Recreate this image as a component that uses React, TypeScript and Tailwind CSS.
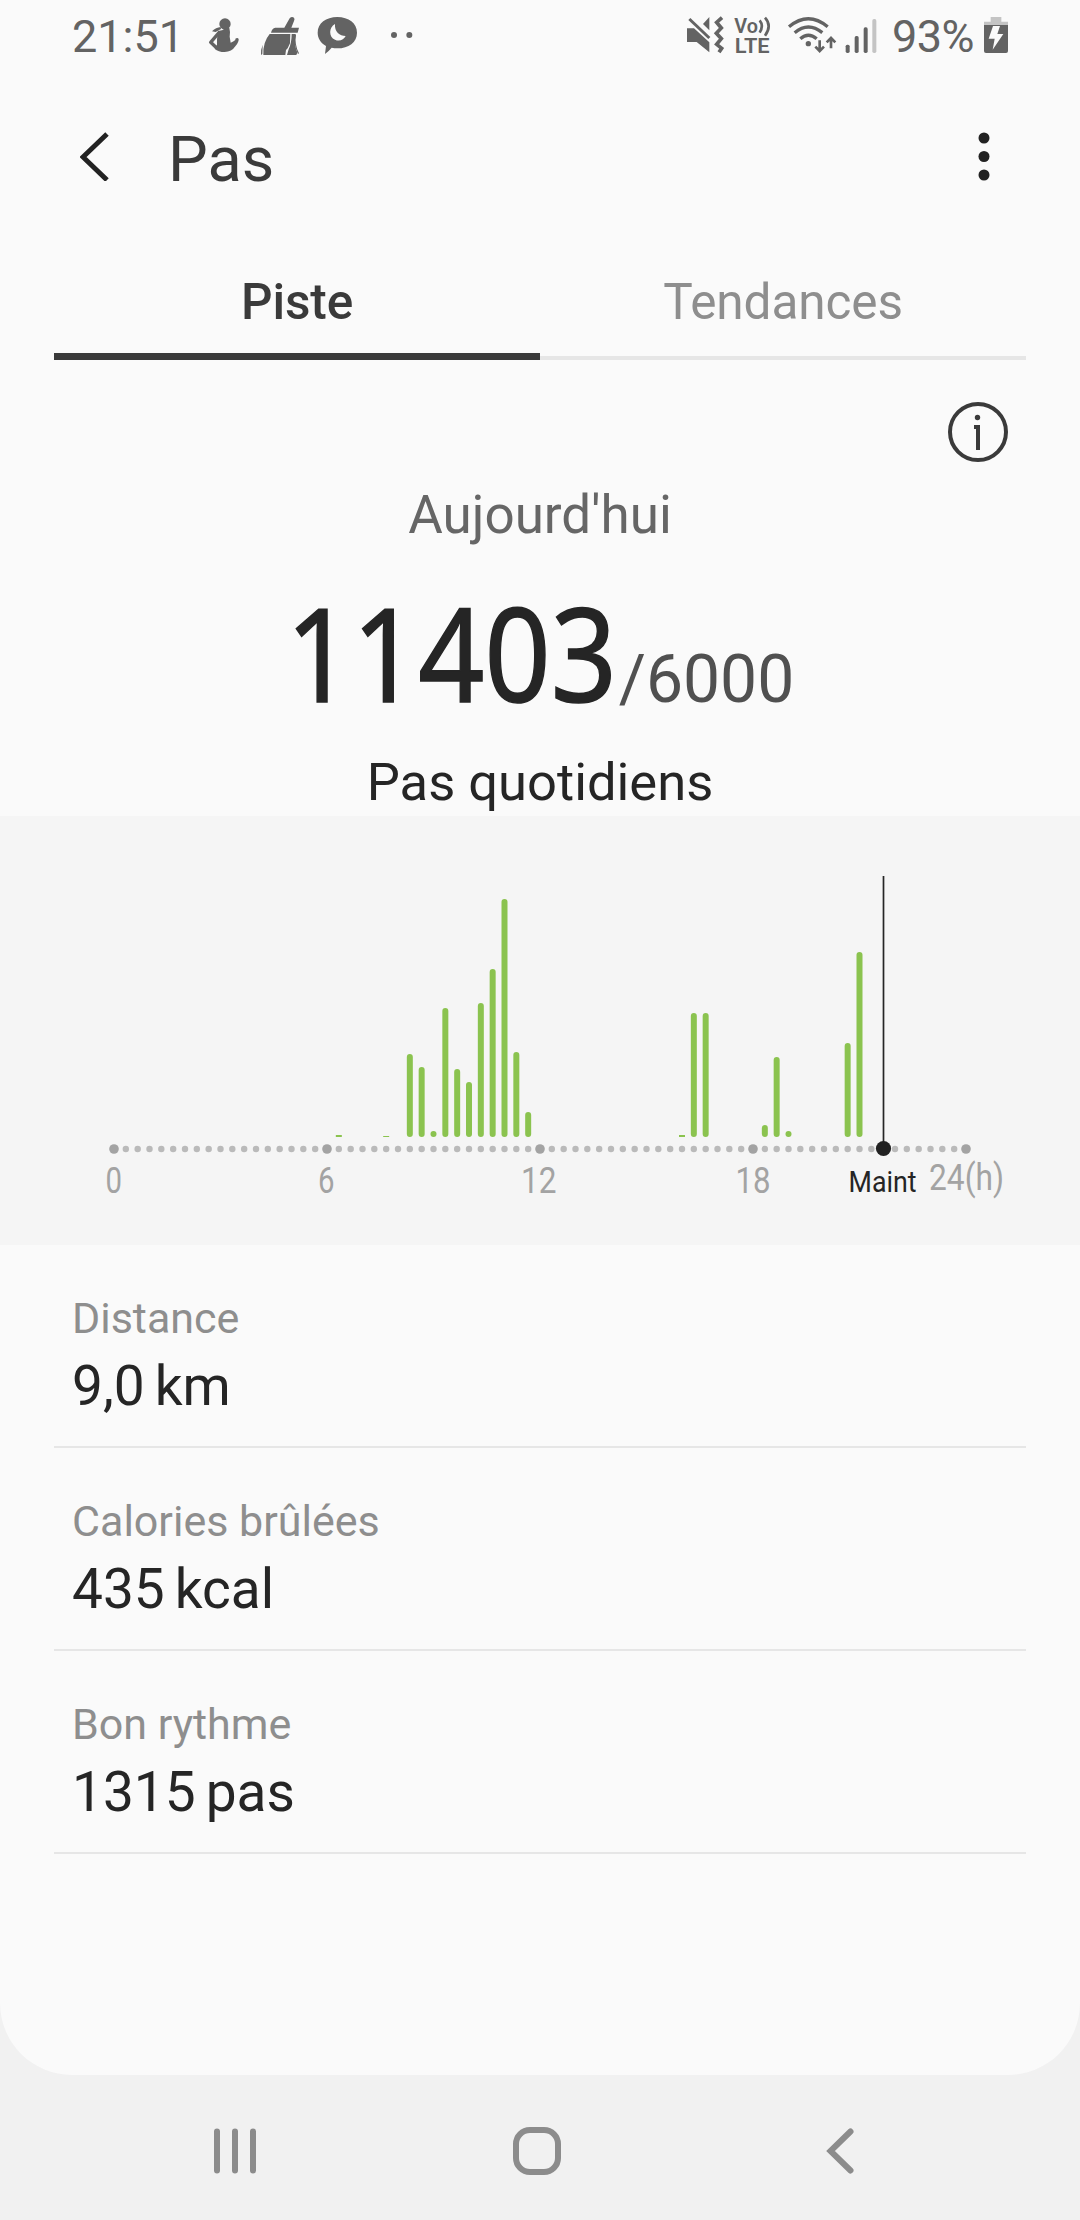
const STEP = 213 / 18;

// one slot = 20 minutes, height in px
const BARS = [
  { slot: 19, height: 2 },
  { slot: 23, height: 1 },
  { slot: 25, height: 83 },
  { slot: 26, height: 70 },
  { slot: 27, height: 6 },
  { slot: 28, height: 129 },
  { slot: 29, height: 68 },
  { slot: 30, height: 55 },
  { slot: 31, height: 134 },
  { slot: 32, height: 168 },
  { slot: 33, height: 238 },
  { slot: 34, height: 85 },
  { slot: 35, height: 25 },
  { slot: 48, height: 2 },
  { slot: 49, height: 124 },
  { slot: 50, height: 124 },
  { slot: 55, height: 12 },
  { slot: 56, height: 80 },
  { slot: 57, height: 6 },
  { slot: 62, height: 94 },
  { slot: 63, height: 185 },
];

const HOURS = [
  { label: "0", x: 105.5, width: 16.5 },
  { label: "6", x: 318, width: 16.5 },
  { label: "12", x: 521, width: 35.5 },
  { label: "18", x: 735.5, width: 35 },
];

const STATS = [
  { label: "Distance", value: "9,0", unit: "km" },
  { label: "Calories brûlées", value: "435", unit: "kcal" },
  { label: "Bon rythme", value: "1315", unit: "pas" },
];

function StatusBar() {
  return (
    <div className="flex h-[74px] items-center pl-[72px] pr-[70px] text-[#636363]">
      <span className="mb-[2px] w-[134px] text-[45px] leading-none">21:51</span>
      <svg width="210" height="42" viewBox="468 48 630 126" fill="currentColor">
        {/* Person */}
        <circle cx="525" cy="72" r="17" />
        <path d="M504 92 Q518 94 526 84 L538 84 L540 96 L539 110 L542 128 Q550 125 556 120 L556 116 Q563 112 566 117 Q567 126 556 139 Q545 156 524 156 Q505 156 494 146 L501 134 L501 118 Z" />
        <path d="M507 98 L482 127 L501 145" fill="none" stroke="currentColor" strokeWidth="10" strokeLinejoin="round" />
        <path d="M486 94 Q498 82 512 81 L513 87 Q505 91 497 96 Z" />
        {/* Broom */}
        <path d="M719 55 Q725 48 732 53 Q735 57 732 63 L724 83 L747 83 L743 98 L663 98 Q666 85 676 83 L703 83 Z" />
        <path d="M659 102 L721 102 L720 130 L713 145 L708 150 L706 165 L640 165 Q638 127 659 102 Z M725 102 L737 102 Q731 132 742 158 L739 165 L711 165 L716 148 Q725 130 725 102 Z" />
        <path d="M638 134 L637 162 L633 165 Q632 148 638 134 Z M738 104 Q733 133 747 160 L744 162 Q730 132 735 104 Z" />
        {/* Chat bubble */}
        <path d="M862 51 C896 51 921 70 921 98 C921 127 896 145 862 145 Q853 145 845 143 Q836 154 825 162 L828 138 C812 128 803 115 803 98 C803 70 828 51 862 51 Z M855 72 C836 81 836 112 855 119 C869 126 882 118 887 108 C869 108 853 96 855 72 Z" fillRule="evenodd" />
        <circle cx="1032" cy="105" r="9" />
        <circle cx="1078" cy="105" r="9" />
      </svg>
      <div className="ml-auto flex items-center">
        <svg width="192" height="54" viewBox="48 30 576 162" fill="currentColor">
          {/* Mute + vibrate */}
          <path d="M51 85 L72 85 L118 127 L118 157 L80 126 L51 126 Z M118 51 L118 91 L99 72 Z" />
          <path d="M58 57 L118 114" stroke="currentColor" strokeWidth="9" />
          <path d="M156 53 L140 67 L154 84 L139 100 L154 116 L140 133 L155 145 L147 157" fill="none" stroke="currentColor" strokeWidth="11" />
          {/* VoLTE */}
          <text x="193" y="98" fontSize="60" fontWeight="600" textLength="71" lengthAdjust="spacingAndGlyphs">Vo</text>
          <path d="M269 61 Q282 77 269 98 M285 53 Q307 77 285 107" fill="none" stroke="currentColor" strokeWidth="8" />
          <text x="194" y="158" fontSize="62" fontWeight="600" textLength="105" lengthAdjust="spacingAndGlyphs">LTE</text>
          {/* Wifi */}
          <g fill="none" stroke="currentColor" strokeWidth="10">
            <path d="M357 80 Q415 32 473 80" />
            <path d="M374 98 Q415 64 457 98" />
            <path d="M391 116 Q415 95 440 116" />
            <path d="M449 121 L449 151 M436 140 L449 153 L462 140" strokeWidth="8" />
            <path d="M483 145 L483 115 M470 127 L483 114 L496 127" strokeWidth="8" />
          </g>
          <circle cx="415" cy="131" r="8" />
          {/* Signal */}
          <rect x="527" y="134" width="12" height="25" rx="5" />
          <rect x="554" y="108" width="12" height="51" rx="5" />
          <rect x="581" y="82" width="12" height="77" rx="5" />
          <rect x="607" y="57" width="12" height="102" rx="5" fill="#c4c4c4" />
        </svg>
        <span className="mb-[2px] ml-[14px] w-[90px] text-[45px] leading-none tracking-[-0.5px]">93%</span>
        <svg width="28" height="42" viewBox="936 48 84 126">
          <path d="M962 51 H994 V65 H1014 V76 H942 V65 H962 Z" fill="#c4c4c4" />
          <path d="M942 75 H1014 V153 Q1014 159 1008 159 H948 Q942 159 942 153 Z" fill="currentColor" />
          <path d="M969 78 L990 78 L982 102 L1000 102 L968 149 L974 116 L956 116 Z" fill="#fafafa" />
        </svg>
      </div>
    </div>
  );
}

function Header() {
  return (
    <header className="flex h-[170px] items-center pl-[80px] pr-[90px]">
      <svg width="30" height="50" viewBox="0 0 30 50" fill="none" className="mb-[6px]">
        <path d="M27 3 L3 26 L27 49" stroke="#222" strokeWidth="5" />
      </svg>
      <h1 className="ml-[58px] text-[63px] leading-none text-[#3a3a3a]">Pas</h1>
      <svg width="12" height="50" viewBox="0 0 12 50" fill="#222" className="ml-auto mb-[6px]">
        <circle cx="6" cy="7" r="5.500" />
        <circle cx="6" cy="25.500" r="5.500" />
        <circle cx="6" cy="44" r="5.500" />
      </svg>
    </header>
  );
}

function Tabs() {
  return (
    <nav className="mx-[54px] grid h-[116px] grid-cols-2 text-center text-[49.500px] leading-[116px] tracking-[-0.1px]">
      <button className="font-medium text-[#3a3a3a] shadow-[inset_0_-7px_0_#3a3a3a]">Piste</button>
      <button className="text-[#8e8e8e] shadow-[inset_0_-4px_0_#e6e6e6]">Tendances</button>
    </nav>
  );
}

function Summary() {
  return (
    <section className="flex h-[456px] flex-col items-center pt-[42px]">
      <svg width="60" height="60" viewBox="0 0 60 60" className="mr-[72px] self-end">
        <circle cx="30" cy="30" r="28" fill="none" stroke="#3a3a3a" strokeWidth="4" />
        <circle cx="29.500" cy="15.500" r="2.700" fill="#3a3a3a" />
        <path d="M26 25 H30 V48" fill="none" stroke="#3a3a3a" strokeWidth="4" />
      </svg>
      <p className="mt-[23px] text-[53px] leading-[60px] text-[#666]">Aujourd'hui</p>
      <div className="mt-[42px] flex h-[130px] items-baseline">
        <span className="w-[333px] origin-left scale-x-[0.89] font-['Noto_Sans',sans-serif] text-[130px] leading-[130px] text-[#252525] [-webkit-text-stroke:1.5px_#252525]">11403</span>
        <span className="text-[66px] leading-none text-[#505050]">/6000</span>
      </div>
      <p className="mt-[35px] text-[52.500px] leading-[60px] text-[#252525]">Pas quotidiens</p>
    </section>
  );
}

function StepsChart() {
  return (
    <svg width="1080" height="429" viewBox="0 816 1080 429" className="block bg-[#f5f5f5]">
      {BARS.map(({ slot, height }) => (
        <rect
          key={slot}
          x={111 + slot * STEP}
          y={1137 - height}
          width="6"
          height={height}
          rx={height > 4 ? 3 : 0}
          fill="#8bc34f"
        />
      ))}
      {Array.from({ length: 73 }, (_, i) => (
        <circle
          key={i}
          cx={114 + i * STEP}
          cy="1149"
          r={i % 18 === 0 ? 4.8 : 3.2}
          fill={i % 18 === 0 ? "#a3a3a3" : "#bababa"}
        />
      ))}
      <path d="M883.500 876 V1149" stroke="#252525" strokeWidth="1.700" />
      <circle cx="883.500" cy="1148.500" r="7.600" fill="#222" />
      <g fontSize="36" fill="#a3a3a3">
        {HOURS.map((hour) => (
          <text key={hour.label} x={hour.x} y="1192.500" textLength={hour.width} lengthAdjust="spacingAndGlyphs">
            {hour.label}
          </text>
        ))}
        <text x="929" y="1190" textLength="75" lengthAdjust="spacingAndGlyphs">24(h)</text>
      </g>
      <text x="848.500" y="1191.500" fontSize="30" fill="#252525" textLength="68" lengthAdjust="spacingAndGlyphs">Maint</text>
    </svg>
  );
}

function NavigationBar() {
  return (
    <div className="flex h-[145px] items-center justify-between px-[210px] pt-[7px]">
      <svg width="48" height="50" viewBox="0 0 48 50" stroke="#8c8c8c" strokeWidth="6" strokeLinecap="round">
        <path d="M7 5.500 V44.500 M25 5.500 V44.500 M43 5.500 V44.500" />
      </svg>
      <svg width="50" height="50" viewBox="0 0 50 50" fill="none" className="mr-[6px]">
        <rect x="4" y="4" width="42" height="42" rx="14" stroke="#8c8c8c" strokeWidth="6" />
      </svg>
      <svg width="48" height="50" viewBox="0 0 48 50" fill="none">
        <path d="M28.500 5.500 L8.500 25 L28.500 44.500" stroke="#8c8c8c" strokeWidth="6" strokeLinecap="round" />
      </svg>
    </div>
  );
}

export default function App() {
  return (
    <div className="h-[2220px] w-[1080px] overflow-hidden bg-[#f1f1f1] font-[Roboto,sans-serif]">
      <main className="h-[2075px] rounded-b-[72px] bg-[#fafafa]">
        <StatusBar />
        <Header />
        <Tabs />
        <Summary />
        <StepsChart />
        <ul className="mx-[54px]">
          {STATS.map((stat) => (
            <li key={stat.label} className="h-[203px] border-b-2 border-[#e6e6e6] pt-12 pl-[18px]">
              <p className="text-[43px] leading-[50px] text-[#8e8e8e]">{stat.label}</p>
              <p className="mt-[13px] text-[55px] leading-[60px] text-[#252525]">
                {stat.value}
                <span className="ml-[10px]">{stat.unit}</span>
              </p>
            </li>
          ))}
        </ul>
      </main>
      <NavigationBar />
    </div>
  );
}
